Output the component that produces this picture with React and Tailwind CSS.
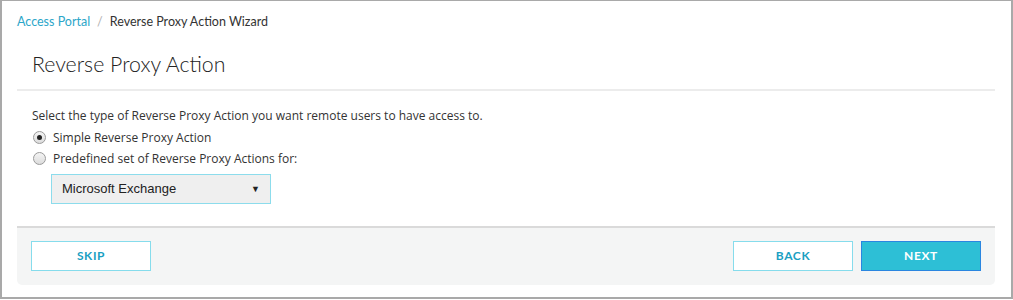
import React from 'react';

const Radio = ({ checked }) => (
  <span className="flex h-[13px] w-[13px] items-center justify-center rounded-full border border-[#9a9a9a] bg-gradient-to-b from-[#f4f4f4] to-[#dcdcdc]">
    {checked && <span className="h-[5px] w-[5px] rounded-full bg-[#222]" />}
  </span>
);

const OutlineButton = ({ children }) => (
  <button className="flex h-[30px] w-[120px] items-center justify-center border border-[#86dcec] bg-white text-[12px] font-bold tracking-[0.6px] text-[#1aa0c2]">
    {children}
  </button>
);

const App = () => {
  return (
    <div
      className="h-[299px] w-[1013px] border-y-2 border-l-2 border-r-2 border-[#a9a9a9] border-t bg-white"
      style={{ fontFamily: "'Open Sans', 'Liberation Sans', sans-serif" }}
    >
      <div className="pl-[15px] pr-[16px]">
        {/* Breadcrumb */}
        <div className="flex h-[39px] items-center gap-[7px] pt-[3px] text-[12.5px]" style={{ fontFamily: "Lato, sans-serif" }}>
          <span className="text-[#2ba6c9]">Access Portal</span>
          <span className="text-[#b0b0b0]">/</span>
          <span className="text-[#333]">Reverse Proxy Action Wizard</span>
        </div>

        {/* Heading */}
        <div className="flex h-[51px] items-center border-b-2 border-[#ececec] pl-[15px] pt-[1px]">
          <h1 className="text-[21.3px] font-light text-[#222]" style={{ fontFamily: "Lato, sans-serif" }}>
            Reverse Proxy Action
          </h1>
        </div>

        {/* Options */}
        <div className="flex flex-col pl-[15px] pt-[15px] text-[12px] text-[#333]">
          <div className="leading-[20px]">Select the type of Reverse Proxy Action you want remote users to have access to.</div>
          <div className="mt-[1px] flex h-[21px] items-center gap-[7px] pl-[1px]">
            <Radio checked />
            <span>Simple Reverse Proxy Action</span>
          </div>
          <div className="flex h-[21px] items-center gap-[7px] pl-[1px]">
            <Radio />
            <span>Predefined set of Reverse Proxy Actions for:</span>
          </div>
          <div className="ml-[19px] mt-[5px] flex h-[30px] w-[220px] items-center justify-between border border-[#8cdcec] bg-[#efefef] pl-[10px] pr-[10px]">
            <span className="text-[13px] text-[#222]" style={{ fontFamily: "'Liberation Sans', Arial, sans-serif" }}>
              Microsoft Exchange
            </span>
            <span className="text-[9px] text-[#222]">▼</span>
          </div>
        </div>

        {/* Footer */}
        <div className="mt-[22px] flex h-[59px] items-center justify-between rounded-b-[5px] border-t-2 border-[#dadada] bg-[#f4f5f5] px-[14px] pb-[2px]" style={{ fontFamily: "Lato, sans-serif" }}>
          <OutlineButton>SKIP</OutlineButton>
          <div className="flex gap-[8px]">
            <OutlineButton>BACK</OutlineButton>
            <button className="flex h-[30px] w-[120px] items-center justify-center border border-[#2a86e0] bg-[#2dbfd6] text-[12px] font-bold tracking-[0.6px] text-white">
              NEXT
            </button>
          </div>
        </div>
      </div>
    </div>
  );
};

export default App;
